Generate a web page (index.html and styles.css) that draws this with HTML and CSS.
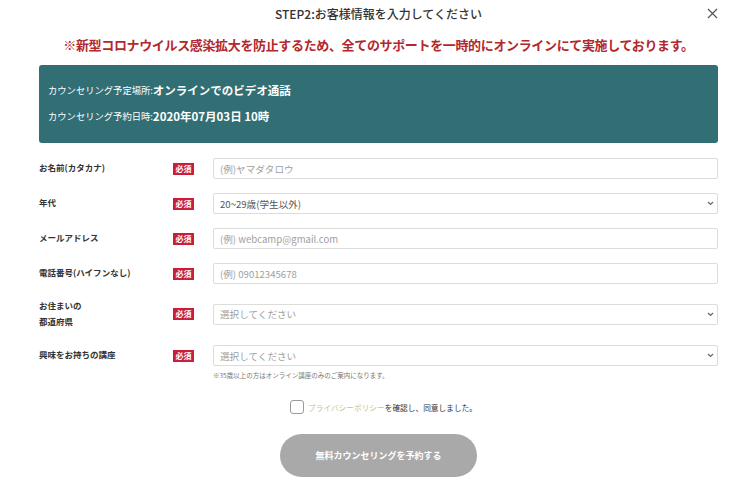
FILE: index.html
```html
<!DOCTYPE html>
<html lang="ja">
<head>
<meta charset="utf-8">
<title>STEP2</title>
<link rel="stylesheet" href="styles.css">
</head>
<body>
<div class="modal">
  <header class="head">
    <h1 class="title">STEP2:お客様情報を入力してください</h1>
    <button class="close" aria-label="閉じる">
      <svg width="11" height="11" viewBox="0 0 11 11"><path d="M1 1L10 10M10 1L1 10" stroke="#555" stroke-width="1.2" fill="none"/></svg>
    </button>
  </header>
  <p class="notice">※新型コロナウイルス感染拡大を防止するため、全てのサポートを一時的にオンラインにて実施しております。</p>
  <div class="summary">
    <p class="sum-line"><span class="sum-label">カウンセリング予定場所:</span><span class="sum-value">オンラインでのビデオ通話</span></p>
    <p class="sum-line"><span class="sum-label">カウンセリング予約日時:</span><span class="sum-value">2020年07月03日 10時</span></p>
  </div>
  <form class="form">
    <div class="row">
      <label class="label">お名前(カタカナ)</label>
      <span class="badge">必須</span>
      <input class="field" type="text" placeholder="(例)ヤマダタロウ">
    </div>
    <div class="row">
      <label class="label">年代</label>
      <span class="badge">必須</span>
      <div class="select-wrap">
        <div class="field select value">20~29歳(学生以外)</div>
        <svg class="chev" width="7" height="5" viewBox="0 0 7 5"><path d="M1 1L3.5 3.5L6 1" stroke="#666" stroke-width="1.2" fill="none"/></svg>
      </div>
    </div>
    <div class="row">
      <label class="label">メールアドレス</label>
      <span class="badge">必須</span>
      <input class="field" type="text" placeholder="(例) webcamp@gmail.com">
    </div>
    <div class="row">
      <label class="label">電話番号(ハイフンなし)</label>
      <span class="badge">必須</span>
      <input class="field" type="text" placeholder="(例) 09012345678">
    </div>
    <div class="row tall">
      <label class="label">お住まいの<br>都道府県</label>
      <span class="badge">必須</span>
      <div class="select-wrap">
        <div class="field select">選択してください</div>
        <svg class="chev" width="7" height="5" viewBox="0 0 7 5"><path d="M1 1L3.5 3.5L6 1" stroke="#666" stroke-width="1.2" fill="none"/></svg>
      </div>
    </div>
    <div class="row last">
      <label class="label">興味をお持ちの講座</label>
      <span class="badge">必須</span>
      <div class="select-wrap">
        <div class="field select">選択してください</div>
        <svg class="chev" width="7" height="5" viewBox="0 0 7 5"><path d="M1 1L3.5 3.5L6 1" stroke="#666" stroke-width="1.2" fill="none"/></svg>
      </div>
    </div>
    <p class="note">※35歳以上の方はオンライン講座のみのご案内になります。</p>
    <div class="agree">
      <span class="check"></span>
      <span class="agree-text"><span class="link">プライバシーポリシー</span>を確認し、同意しました。</span>
    </div>
    <div class="submit-row">
      <button type="button" class="submit">無料カウンセリングを予約する</button>
    </div>
  </form>
</div>
</body>
</html>
```
FILE: styles.css
```css
* { box-sizing: border-box; }
html, body { margin: 0; padding: 0; background: #fff; }
body {
  font-family: "Noto Sans CJK JP", "Noto Sans", sans-serif;
  color: #333;
  width: 750px;
  height: 484px;
  overflow: hidden;
}
.modal {
  width: 679px;
  margin-left: 39px;
}
.head {
  position: relative;
  height: 28px;
  display: flex;
  justify-content: center;
  align-items: center;
}
.title {
  margin: 0;
  font-size: 12px;
  font-weight: 500;
  line-height: 28px;
  color: #333;
}
.close {
  position: absolute;
  right: 0;
  top: 8px;
  border: 0;
  padding: 0;
  background: none;
  width: 11px;
  height: 11px;
  display: flex;
}
.notice {
  margin: 7px 0 0;
  text-align: center;
  font-size: 13px;
  font-weight: 700;
  line-height: 20px;
  color: #b3282d;
  letter-spacing: -0.35px;
  white-space: nowrap;
}
.summary {
  margin-top: 10px;
  height: 78px;
  background: #326f75;
  border-radius: 3px;
  padding: 12px 9px 14px;
  color: #fff;
}
.sum-line {
  margin: 0;
  height: 26px;
  display: flex;
  align-items: center;
}
.sum-label { font-size: 9.3px; }
.sum-value { font-size: 11.5px; font-weight: 700; }
.form {
  margin-top: 15px;
  display: flex;
  flex-direction: column;
}
.row {
  display: flex;
  align-items: center;
  height: 21px;
  margin-bottom: 14px;
}
.row.tall { height: 32px; margin-bottom: 15px; }
.row.last { margin-bottom: 0; }
.label {
  width: 134px;
  font-size: 8.5px;
  font-weight: 700;
  line-height: 16px;
  padding-bottom: 3px;
  color: #333;
}
.badge {
  width: 21px;
  height: 12px;
  background: #c81e3a;
  color: #fff;
  font-size: 8px;
  font-weight: 700;
  line-height: 12px;
  text-align: center;
  margin-right: 19px;
}
.field {
  flex: 1;
  height: 21px;
  border: 1px solid #dcdcdc;
  border-radius: 2px;
  padding: 0 6px;
  font-family: inherit;
  font-size: 9.6px;
  color: #555;
  background: #fff;
  outline: none;
}
.field::placeholder { color: #a0a0a0; }
.select-wrap {
  flex: 1;
  position: relative;
  display: flex;
}
.select {
  display: flex;
  align-items: center;
  color: #a0a0a0;
}
.select.value { color: #555; }
.chev {
  position: absolute;
  right: 4px;
  top: 8px;
}
.note {
  margin: 4px 0 0 174px;
  font-size: 6.5px;
  color: #777;
  line-height: 10px;
}
.agree {
  margin-top: 20px;
  display: flex;
  justify-content: center;
  align-items: center;
  gap: 4px;
  padding-left: 10px;
}
.check {
  width: 14px;
  height: 14px;
  border: 1px solid #999;
  border-radius: 3px;
  background: #fff;
}
.agree-text { font-size: 7.7px; color: #333; }
.link { color: #cfc07e; }
.submit-row {
  margin-top: 20px;
  display: flex;
  justify-content: center;
}
.submit {
  width: 197px;
  height: 43px;
  border: 0;
  border-radius: 22px;
  background: #a9a9a9;
  color: #fff;
  font-family: inherit;
  font-size: 9px;
  font-weight: 700;
}
```
